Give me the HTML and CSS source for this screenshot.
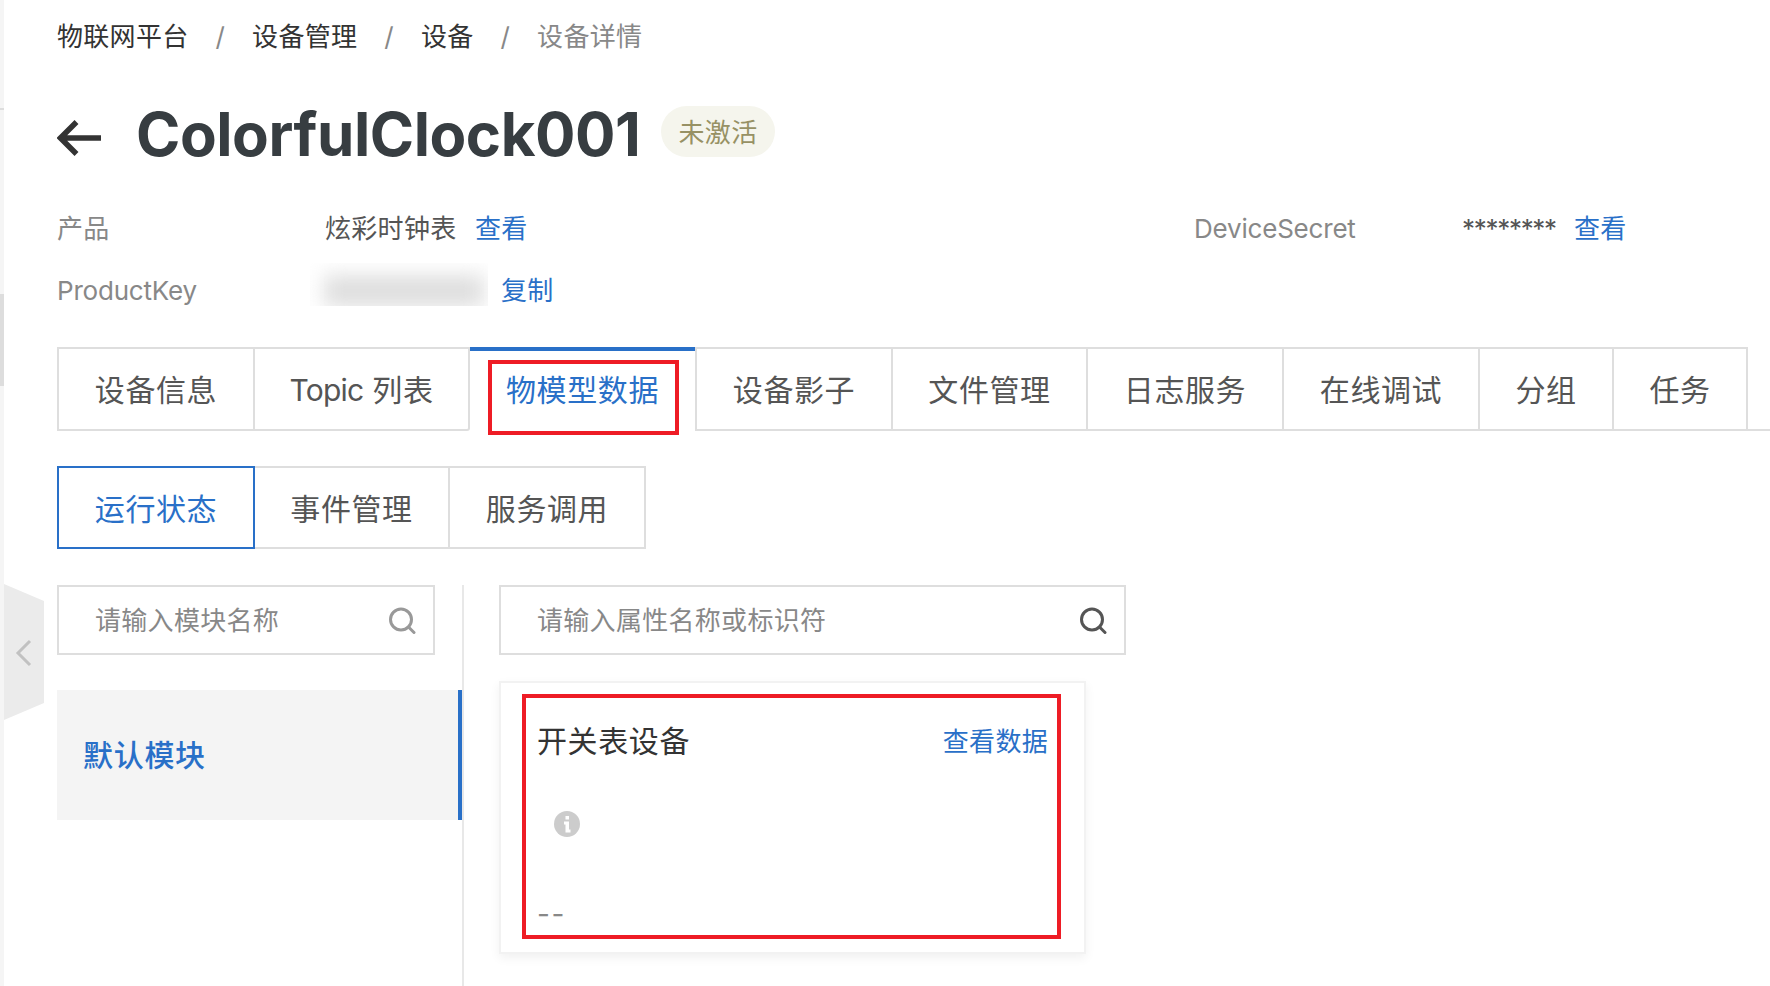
FILE: index.html
```html
<!DOCTYPE html>
<html lang="zh-CN">
<head>
<meta charset="utf-8">
<title>设备详情</title>
<link rel="stylesheet" href="styles.css">
</head>
<body>
<div class="app">
  <aside class="rail">
    <span class="rail-line"></span>
    <span class="rail-thumb"></span>
    <svg class="collapse" width="40" height="136" viewBox="0 0 40 136"><path d="M0 0L40 17V119L0 136Z" fill="#ebebeb"/><path d="M26 57L14 69L26 81" fill="none" stroke="#c1c1c1" stroke-width="3"/></svg>
  </aside>
  <main class="main">
    <nav class="crumbs">
      <a>物联网平台</a><i>/</i><a>设备管理</a><i>/</i><a>设备</a><i>/</i><span class="current">设备详情</span>
    </nav>
    <header class="head">
      <svg class="back" width="46" height="38" viewBox="0 0 46 38"><path d="M44 19H4M19.500 3L3.500 19L19.500 35" fill="none" stroke="#333" stroke-width="5.500"/></svg>
      <h1 class="title">ColorfulClock001</h1>
      <span class="badge">未激活</span>
    </header>
    <section class="info">
      <div class="row">
        <span class="label">产品</span><span class="value product">炫彩时钟表</span><a class="link">查看</a>
      </div>
      <div class="row">
        <span class="label latin">DeviceSecret</span><span class="value stars">********</span><a class="link">查看</a>
      </div>
      <div class="row">
        <span class="label latin">ProductKey</span><span class="mask"><span class="smudge"></span></span><a class="link">复制</a>
      </div>
    </section>
    <div class="tabs">
      <div class="tab first">设备信息</div>
      <div class="tab topic"><span class="word">Topic</span> 列表</div>
      <div class="tab active">物模型数据<span class="mark mark-tab"></span></div>
      <div class="tab shadow">设备影子</div>
      <div class="tab files">文件管理</div>
      <div class="tab">日志服务</div>
      <div class="tab">在线调试</div>
      <div class="tab short">分组</div>
      <div class="tab short">任务</div>
      <div class="tab-rest"></div>
    </div>
    <div class="subtabs">
      <div class="sub on">运行状态</div>
      <div class="sub">事件管理</div>
      <div class="sub last">服务调用</div>
    </div>
    <div class="body">
      <section class="modules">
        <div class="search search-module"><span>请输入模块名称</span>
          <svg class="glass" width="28" height="28" viewBox="0 0 28 28"><circle cx="13" cy="12.500" r="10.500"/><path d="M20.500 20L26 25.500"/></svg>
        </div>
        <div class="module">默认模块</div>
      </section>
      <section class="props">
        <div class="search search-prop"><span>请输入属性名称或标识符</span>
          <svg class="glass dark" width="28" height="28" viewBox="0 0 28 28"><circle cx="13" cy="12.500" r="10.500"/><path d="M20.500 20L26 25.500"/></svg>
        </div>
        <article class="card">
          <div class="card-head"><span class="card-name">开关表设备</span><a class="card-link">查看数据</a></div>
          <svg class="hint" width="26" height="26" viewBox="0 0 26 26"><circle cx="13" cy="13" r="13" fill="#ccc"/><path d="M11.500 5h3.500v3.500h-3.500zM10 10.500h5v8h1.500v3h-5v-8H10z" fill="#fff"/></svg>
          <div class="card-value">--</div>
          <span class="mark mark-card"></span>
        </article>
      </section>
    </div>
  </main>
</div>
</body>
</html>
```
FILE: styles.css
```css
* { box-sizing: border-box; }
body {
  margin: 0;
  background: #fff;
  color: #555;
  font-family: Inter, "Noto Sans CJK SC", sans-serif;
  font-size: 26px;
  line-height: 38px;
  letter-spacing: 0.3px;
}
.app { display: flex; width: 1770px; height: 986px; overflow: hidden; }
.rail { position: relative; flex: none; width: 4px; background: #f5f5f5; }
.rail-line { position: absolute; left: 0; top: 108px; width: 4px; height: 2px; background: #ddd; }
.rail-thumb { position: absolute; left: 0; top: 294px; width: 4px; height: 92px; background: #ddd; }
.collapse { position: absolute; left: 4px; top: 584px; }
.main { flex: 1; min-width: 0; padding: 18px 0 0 53px; }

.crumbs { display: flex; height: 38px; color: #333; }
.crumbs i { width: 63.6px; text-align: center; font-style: normal; color: #888; }
.crumbs .current { color: #888; }

.head { display: flex; align-items: center; height: 80px; margin-top: 36px; }
.back { margin-top: 12px; flex: none; }
.title { margin: 3px 0 0 33px; width: 525px; font-size: 60px; line-height: 72px; font-weight: 700; color: #373d41; letter-spacing: -0.45px; white-space: nowrap; }
.badge { height: 51px; width: 114px; margin-bottom: 1px; border-radius: 26px; background: #f5f5ed; color: #979164; line-height: 53px; text-align: center; }

.info { display: grid; grid-template-columns: 1137px 1fr; row-gap: 24px; margin-top: 38px; }
.row { display: flex; height: 38px; white-space: nowrap; }
.label { width: 268px; color: #888; }
.label.latin { letter-spacing: -0.2px; }
.product { width: 150px; }
.stars { width: 112px; letter-spacing: -1.3px; }
.link { color: #2970c8; }
.mask { flex: none; width: 178px; height: 43px; margin: -9px 13px 0 -15px; overflow: hidden; }
.smudge { display: block; width: 160px; height: 32px; margin: 12px 0 0 14px; background: #dedede; filter: blur(10px); }

.tabs { display: flex; height: 84px; margin-top: 37px; font-size: 30px; letter-spacing: 0.6px; line-height: 82px; }
.tab { flex: none; width: 196px; height: 84px; border: solid #dedede; border-width: 2px 2px 2px 0; text-align: center; white-space: nowrap; }
.word { letter-spacing: -0.8px; }
.first { width: 198px; border-left-width: 2px; }
.topic { width: 215px; border-bottom-right-radius: 3px; }
.tab.active { position: relative; width: 225px; border: 0; border-top: 4px solid #2970c8; color: #2970c8; line-height: 78px; }
.shadow { width: 198px; border-left-width: 2px; }
.files { width: 195px; }
.short { width: 134px; }
.tab-rest { flex: 1; border-bottom: 2px solid #dedede; }
.mark { position: absolute; border: 4px solid #ee1c25; }
.mark-tab { left: 18px; top: 9px; width: 191px; height: 75px; }

.subtabs { display: flex; margin-top: 35px; font-size: 30px; letter-spacing: 0.6px; line-height: 82px; }
.sub { width: 195px; height: 83px; border: solid #dedede; border-width: 2px 2px 2px 0; text-align: center; }
.sub.on { width: 198px; border: 2px solid #2970c8; color: #2970c8; }
.sub.last { width: 196px; }

.body { display: flex; height: 401px; margin-top: 36px; }
.modules { width: 407px; border-right: 2px solid #e8e8e8; }
.search { display: flex; align-items: center; justify-content: space-between; height: 70px; padding: 2px 17px 0 36px; border: 2px solid #dedede; color: #888; }
.search-module { width: 378px; }
.search-prop { width: 627px; }
.glass { fill: none; stroke: #999; stroke-width: 3; stroke-linecap: round; }
.glass.dark { stroke: #555; }
.module { height: 130px; margin-top: 35px; padding-left: 26px; border-right: 4px solid #2970c8; background: #f4f4f4; color: #2970c8; font-size: 30px; font-weight: 500; line-height: 130px; letter-spacing: 0.7px; }
.props { padding-left: 35px; }
.card { position: relative; width: 587px; height: 273px; margin-top: 26px; padding: 36px 36px 0; border: 2px solid #f2f2f2; background: #fff; box-shadow: 0 4px 10px rgba(0,0,0,0.06); }
.card-head { display: flex; justify-content: space-between; align-items: center; height: 44px; }
.card-name { color: #333; font-size: 30px; letter-spacing: 0.6px; }
.card-link { padding-top: 2px; color: #2970c8; }
.hint { display: block; margin: 48px 0 0 17px; }
.card-value { margin-top: 58px; color: #888; font-size: 28px; letter-spacing: 1.6px; }
.mark-card { left: 21px; top: 11px; width: 539px; height: 245px; }
```
